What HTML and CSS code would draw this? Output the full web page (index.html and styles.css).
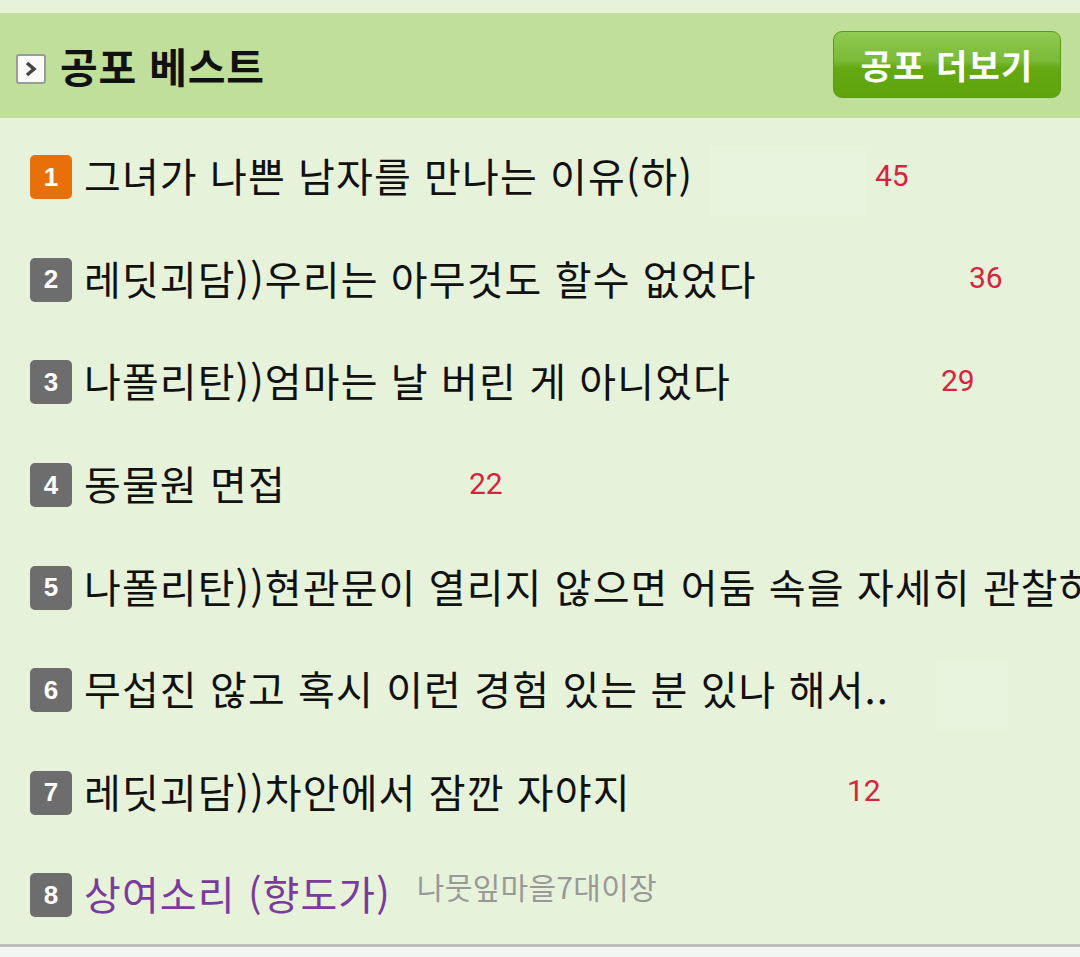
FILE: index.html
```html
<!DOCTYPE html>
<html lang="ko">
<head>
<meta charset="utf-8">
<link rel="stylesheet" href="styles.css">
</head>
<body>
<div class="page">
  <div class="topgap"></div>
  <div class="header">
    <div class="title">
      <span class="arrow"><svg width="30" height="30" viewBox="0 0 30 30"><rect x="1" y="1" width="28" height="28" rx="2" fill="#fafafa" stroke="#9a9a9a" stroke-width="2"/><path d="M11 9 L18 15 L11 21" fill="none" stroke="#444" stroke-width="3.5"/></svg></span>
      <span class="title-text">공포 베스트</span>
    </div>
    <div class="more-btn">공포 더보기</div>
  </div>
  <ul class="list">
    <li class="row"><span class="badge first">1</span><span class="subject">그녀가 나쁜 남자를 만나는 이유(하)</span><span class="mask" style="left:710px;width:155px"></span><span class="count" style="left:875px">45</span></li>
    <li class="row"><span class="badge">2</span><span class="subject">레딧괴담))우리는 아무것도 할수 없었다</span><span class="count" style="left:969px">36</span></li>
    <li class="row"><span class="badge">3</span><span class="subject">나폴리탄))엄마는 날 버린 게 아니었다</span><span class="count" style="left:941px">29</span></li>
    <li class="row"><span class="badge">4</span><span class="subject">동물원 면접</span><span class="count" style="left:469px">22</span></li>
    <li class="row"><span class="badge">5</span><span class="subject">나폴리탄))현관문이 열리지 않으면 어둠 속을 자세히 관찰하라</span></li>
    <li class="row"><span class="badge">6</span><span class="subject">무섭진 않고 혹시 이런 경험 있는 분 있나 해서..</span><span class="mask" style="left:936px;width:72px"></span></li>
    <li class="row"><span class="badge">7</span><span class="subject">레딧괴담))차안에서 잠깐 자야지</span><span class="count" style="left:847px">12</span></li>
    <li class="row"><span class="badge">8</span><span class="subject visited">상여소리 (향도가)</span><span class="author">나뭇잎마을7대이장</span></li>
  </ul>
  <div class="bottom"></div>
</div>
</body>
</html>
```
FILE: styles.css
```css
html, body {
  margin: 0;
  padding: 0;
}
body {
  width: 1080px;
  height: 957px;
  overflow: hidden;
  background: #f1f6f3;
  font-family: "Noto Sans CJK KR", "Noto Sans", sans-serif;
}
.page {
  width: 1080px;
}
.topgap {
  height: 13px;
  background: #e6f3da;
}
.header {
  height: 105px;
  background: #bfdf9b;
  display: flex;
  align-items: center;
  justify-content: space-between;
  padding: 0 19px 0 16px;
  box-sizing: border-box;
}
.title {
  display: flex;
  align-items: center;
  gap: 14px;
}
.arrow {
  display: flex;
  width: 30px;
  height: 30px;
  margin-top: 6px;
}
.title-text {
  font-size: 41px;
  font-weight: 700;
  color: #111;
  letter-spacing: 0.8px;
  line-height: 1;
}
.more-btn {
  width: 228px;
  height: 67px;
  box-sizing: border-box;
  border-radius: 9px;
  border: 1px solid #5a9c1a;
  background: linear-gradient(#8fca52 0%, #7aba36 45%, #64a912 55%, #5fa40c 100%);
  color: #fff;
  font-size: 34px;
  font-weight: 700;
  display: flex;
  align-items: center;
  justify-content: center;
  letter-spacing: 1.2px;
  margin-top: -3px;
}
.list {
  list-style: none;
  margin: 0;
  padding: 6px 0 0 0;
  background: #e6f3da;
  height: 829px;
  box-sizing: border-box;
  border-bottom: 3px solid #bdbdbd;
}
.row {
  position: relative;
  height: 102.6px;
  display: flex;
  align-items: center;
  white-space: nowrap;
  overflow: hidden;
  padding-left: 30px;
}
.badge {
  flex: none;
  width: 42px;
  height: 44px;
  border-radius: 5px;
  background: #6d6d6d;
  color: #fff;
  font-family: "Liberation Sans", "Roboto", sans-serif;
  font-weight: 700;
  font-size: 26px;
  display: flex;
  align-items: center;
  justify-content: center;
  margin-top: 4px;
}
.badge.first {
  background: #e8700a;
}
.subject {
  margin-left: 12px;
  font-size: 40px;
  color: #111;
  letter-spacing: 1.1px;
}
.subject.visited {
  color: #7b3b9c;
}
.author {
  margin-left: 26px;
  font-size: 30px;
  color: #999;
  letter-spacing: 0.3px;
  margin-top: -14px;
}
.mask {
  position: absolute;
  top: 22px;
  height: 70px;
  background: #e9f4df;
}
.count {
  position: absolute;
  top: 0;
  bottom: 0;
  display: flex;
  align-items: center;
  font-family: "Roboto", "Noto Sans", sans-serif;
  font-size: 30px;
  color: #d9223f;
}
.bottom {
  height: 10px;
  background: #f1f6f3;
}
```
